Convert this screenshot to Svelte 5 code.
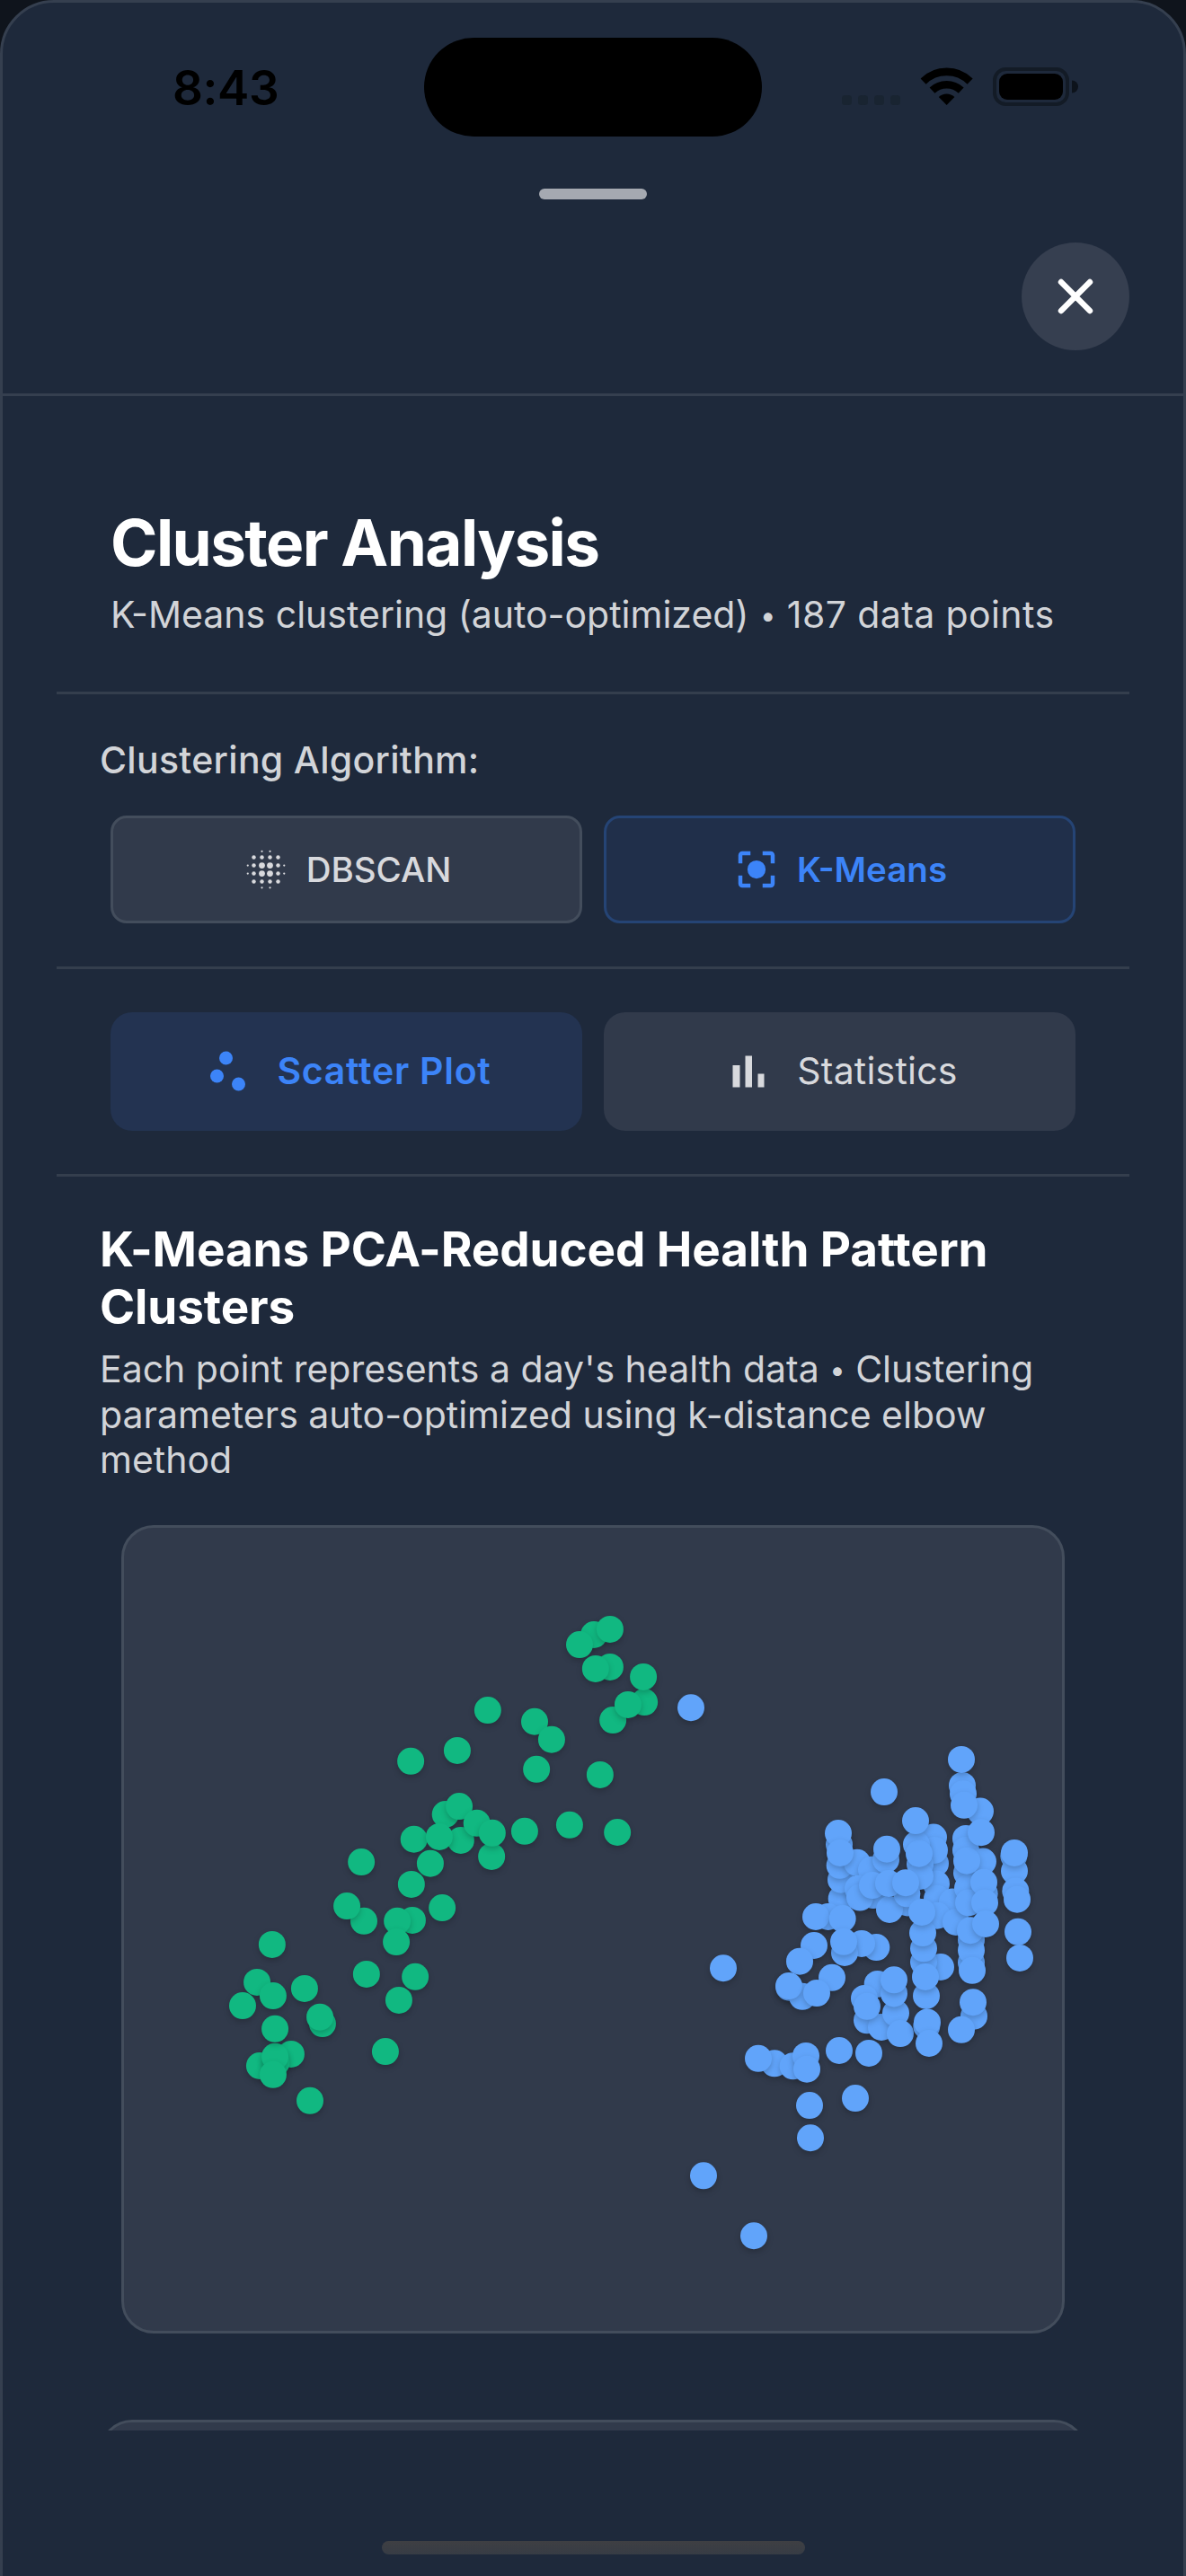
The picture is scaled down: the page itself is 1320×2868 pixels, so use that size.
<script>
  const green = [
    [1235,147],[1285,132],[1190,174],[1285,235],[1240,240],[1392,331],[1389,262],[1294,380],[1341,338],
    [904,353],[1050,384],[1103,433],[809,463],[664,492],[1056,514],[1254,529],[772,637],[815,615],
    [820,708],[674,705],[753,698],[870,661],[916,752],[918,688],[1019,683],[1159,666],[1308,686],
    [725,771],[666,828],[510,767],[518,928],[465,887],[762,892],[669,926],[622,928],[619,985],
    [232,992],[526,1073],[678,1080],[627,1144],[185,1095],[140,1159],[235,1132],[333,1112],
    [389,1208],[381,1190],[291,1291],[193,1323],[245,1314],[241,1298],[241,1222],[235,1347],[585,1284],[350,1418]
  ].map(([x, y]) => [82 + x / 2.8, 59 + y / 2.45]);

  const blue = [
    [147,98],[792,321],[1053,304],[1056,326],[1113,372],[1059,356],[1050,235],
    [642,460],[650,603],[648,553],[644,515],[639,430],[702,508],[645,482],
    [750,527],[705,577],[756,594],[711,600],[798,500],[801,472],[753,568],
    [957,441],[963,510],[960,475],[900,460],[966,564],[969,603],[912,512],[912,544],[909,484],[897,397],
    [870,614],[1020,612],[969,648],[810,632],[868,590],[807,563],[864,561],
    [1065,444],[1065,475],[1068,535],[1071,575],[1122,505],[1068,503],[1116,428],
    [1032,665],[1127,590],[1074,614],[1125,560],[1128,614],[1083,712],
    [605,651],[564,651],[653,656],[766,732],[717,722],[660,746],[657,717],[558,727],[510,769],
    [475,838],[519,862],[474,834],[618,812],[567,853],[255,787],
    [1083,772],[1083,740],[1080,687],[1131,670],[1086,793],[981,784],[924,771],[924,735],[921,694],[918,639],[933,860],[930,810],
    [770,829],[726,867],[735,925],[783,943],[735,888],[831,906],[825,854],[825,818],[846,960],
    [934,940],[936,930],[942,986],[1092,914],[1089,877],[1050,950],
    [1225,490],[1227,530],[1227,482],[1231,583],[1236,605],[1239,691],[1245,760],
    [642,1005],[741,1012],[426,1039],[372,1026],[488,1046],[531,1019],[534,1054],
    [543,1150],[546,1236],[696,1131],[189,1336],[357,1495]
  ].map(([x, y]) => [582 + x / 3, 159 + y / 2.3758]);

  // Halftone dots of the DBSCAN icon on a 24-unit grid: [x, y, radius]
  const blurDots = [];
  for (const x of [6, 10, 14, 18]) for (const y of [6, 10, 14, 18]) {
    const inner = x > 6 && x < 18 && y > 6 && y < 18;
    blurDots.push([x, y, inner ? 1.5 : 1]);
  }
  for (const a of [10, 14]) for (const b of [3, 21]) blurDots.push([a, b, 0.5], [b, a, 0.5]);
</script>

<div class="screen">
  <div class="sheet">
    <header class="status">
      <div class="time">8:43</div>
      <div class="island"></div>
      <svg class="sys" width="270" height="50" viewBox="0 0 270 50">
        <g fill="#192431">
          <rect x="7" y="34" width="11" height="11" rx="3.5" /><rect x="25" y="34" width="11" height="11" rx="3.5" />
          <rect x="43" y="34" width="11" height="11" rx="3.5" /><rect x="61" y="34" width="11" height="11" rx="3.5" />
        </g>
        <g fill="none" stroke="#000" stroke-width="8.6">
          <path d="M97.6 18.6A37 37 0 0 1 149.6 18.6" /><path d="M107.5 28.6A23.5 23.5 0 0 1 139.7 28.6" />
        </g>
        <path d="M123.6 45l-8.8-9a12.5 12.5 0 0 1 17.6 0z" />
        <rect x="177" y="5" width="81" height="39" rx="12.5" fill="none" stroke="#131b26" stroke-width="4" />
        <rect x="182" y="10" width="71" height="29" rx="9" />
        <path d="M263 17.500a7 7 0 0 1 0 14z" fill="#0d131b" />
      </svg>
    </header>
    <div class="grabber"></div>
    <div class="closebar">
      <button class="close" aria-label="Close">
        <svg width="120" height="120" viewBox="0 0 120 120"><path d="M44 44l32 32M76 44l-32 32" stroke="#fff" stroke-width="6.4" stroke-linecap="round" /></svg>
      </button>
    </div>

    <main>
      <section class="heading">
        <h1>Cluster Analysis</h1>
        <p class="sub">K-Means clustering (auto-optimized) <span class="bullet">•</span> <span class="count">187 data points</span></p>
      </section>

      <section class="algo">
        <div class="label">Clustering Algorithm:</div>
        <div class="row">
          <button class="opt">
            <svg width="54" height="54" viewBox="0 0 24 24" fill="currentColor">
              {#each blurDots as [x, y, r]}<circle cx={x} cy={y} {r} />{/each}
            </svg>
            <span>DBSCAN</span>
          </button>
          <button class="opt on">
            <svg width="54" height="54" viewBox="0 0 24 24" fill="currentColor">
              <path d="M12 7.500a4.500 4.500 0 1 0 0 9 4.500 4.500 0 0 0 0-9zM5 15H3v4c0 1.100.9 2 2 2h4v-2H5v-4zM5 5h4V3H5c-1.100 0-2 .9-2 2v4h2V5zM19 3h-4v2h4v4h2V5c0-1.100-.9-2-2-2zM19 19h-4v2h4c1.100 0 2-.9 2-2v-4h-2v4z" />
            </svg>
            <span>K-Means</span>
          </button>
        </div>
      </section>

      <section class="tabs row">
        <button class="tab on">
          <svg width="60" height="60" viewBox="0 0 24 24" fill="currentColor"><circle cx="7" cy="14" r="3" /><circle cx="11" cy="6" r="3" /><circle cx="16.6" cy="17.6" r="3" /></svg>
          <span>Scatter Plot</span>
        </button>
        <button class="tab">
          <svg width="60" height="60" viewBox="0 0 24 24" fill="currentColor"><path d="M5 9.200h3.200V19H5zM10.600 5h3v14h-3zM16.200 13H19v6h-2.800z" /></svg>
          <span>Statistics</span>
        </button>
      </section>

      <section class="plot">
        <h2>K-Means PCA-Reduced Health Pattern<br />Clusters</h2>
        <p class="desc">Each point represents a day's health data <span class="bullet">•</span> Clustering<br />parameters auto-optimized using k-distance elbow<br />method</p>
        <div class="chart">
          <svg width="1044" height="894" viewBox="0 0 1044 894">
            {#each blue as [x, y]}<circle class="dot blue" cx={x} cy={y} r="15" />{/each}
            {#each green as [x, y]}<circle class="dot green" cx={x} cy={y} r="15" />{/each}
          </svg>
        </div>
        <div class="next"></div>
      </section>
    </main>
    <footer><div class="home"></div></footer>
  </div>
</div>

<style>
  :global(body) { background: #0f141c; }
  * { box-sizing: border-box; }
  .screen { width: 1320px; height: 2868px; overflow: hidden; background: #0f141c; font-family: Inter, "Liberation Sans", sans-serif; }
  .sheet { height: 2928px; border: 3px solid #353f4f; border-radius: 60px; background: #1e293b; display: flex; flex-direction: column; }
  button { font-family: inherit; border: 0; padding: 0; margin: 0; }
  h1, h2, p { margin: 0; white-space: nowrap; }
  .status { height: 207px; flex: none; display: grid; grid-template-columns: 469px 376px 1fr; }
  .time { padding: 63px 0 0 189px; font-size: 53px; line-height: 64px; font-weight: 600; letter-spacing: -0.4px; }
  .island { margin-top: 39px; height: 110px; border-radius: 55px; background: #000; }
  .sys { margin: 69px 0 0 82px; }
  .grabber { flex: none; width: 120px; height: 12px; border-radius: 6px; background: #a5a9b1; margin: 0 auto; }
  .closebar { flex: none; height: 219px; border-bottom: 3px solid #353f4f; display: flex; justify-content: flex-end; padding: 48px 60px 0 0; }
  .close { width: 120px; height: 120px; border-radius: 60px; background: #363f50; display: block; }
  .close svg { display: block; }
  main { flex: none; height: 2265px; overflow: hidden; padding: 0 60px; }
  section { border-bottom: 3px solid #343e4d; }
  .heading { height: 332px; padding: 119px 0 0 60px; }
  h1 { color: #fff; font-size: 71px; line-height: 88px; font-weight: 700; letter-spacing: -1.600px; }
  .sub, .desc { color: #d2d4d8; font-size: 41px; }
  .sub { line-height: 50px; margin-top: 11px; }
  .bullet { font-size: 31px; line-height: 1; position: relative; top: -3px; }
  .sub .bullet { margin: 0 1px; }
  .count { letter-spacing: 0.4px; }
  .algo { height: 306px; padding: 48px 60px 0 48px; }
  .label { color: #d2d4d8; font-size: 41px; line-height: 50px; font-weight: 500; letter-spacing: 0.3px; }
  .row { display: grid; grid-template-columns: 525px 525px; gap: 24px; }
  .algo .row { margin: 37px 0 0 12px; }
  .opt, .tab { display: flex; align-items: center; justify-content: center; color: #d8d9dd; background: #313a4b; white-space: nowrap; }
  .opt { height: 120px; gap: 18px; border: 3px solid #434d5c; border-radius: 18px; font-size: 38.500px; font-weight: 500; }
  .opt.on { color: #3c84f8; background: #202f4a; border-color: #254475; font-weight: 600; }
  .tabs { height: 231px; padding: 48px 60px; }
  .tab { height: 132px; gap: 24px; border-radius: 24px; font-size: 41px; font-weight: 400; letter-spacing: 0.2px; }
  .tab span { padding-bottom: 2px; }
  .tab.on { color: #3c84f8; background: #233351; font-weight: 600; letter-spacing: 0.75px; }
  .plot { border: 0; padding: 49px 0 0 48px; }
  h2 { color: #fff; font-size: 53px; line-height: 64px; font-weight: 700; letter-spacing: -0.100px; }
  .desc { line-height: 50.500px; margin-top: 12px; }
  .chart { width: 1050px; height: 900px; margin: 47.500px 0 0 24px; border: 3px solid #434d5c; border-radius: 36px; background: #313a4b; }
  .chart svg { display: block; }
  .dot { filter: drop-shadow(0 3px 3px rgba(0, 0, 0, .2)); }
  .blue { fill: #61a4fa; }
  .green { fill: #11b881; }
  .next { width: 1098px; height: 200px; margin: 96px 0 0 0; border: 3px solid #434d5c; border-radius: 36px; background: #313a4b; }
  footer { padding-top: 123px; }
  .home { width: 471px; height: 15px; border-radius: 8px; margin: 0 auto; background: linear-gradient(#3e3f43, #373c45); }
</style>
